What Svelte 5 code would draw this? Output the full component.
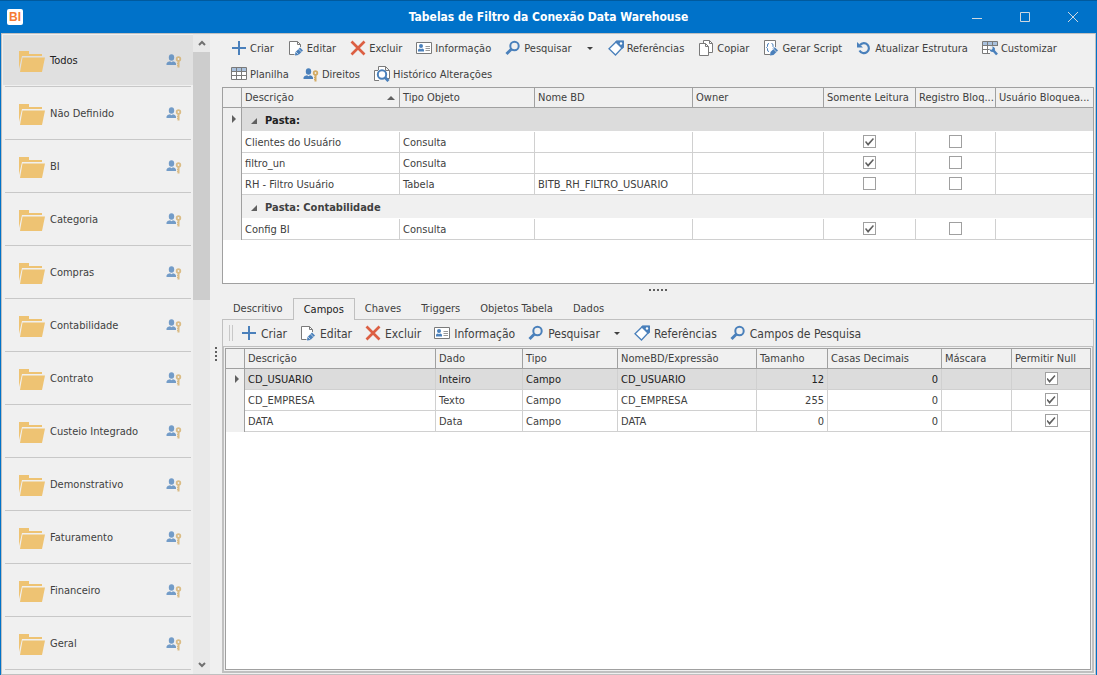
<script>
  const folders = [
    'Todos',
    'Não Definido',
    'BI',
    'Categoria',
    'Compras',
    'Contabilidade',
    'Contrato',
    'Custeio Integrado',
    'Demonstrativo',
    'Faturamento',
    'Financeiro',
    'Geral',
  ];

  const mainTools = [
    [
      { icon: 'add', label: 'Criar' },
      { icon: 'edit', label: 'Editar' },
      { icon: 'delete', label: 'Excluir' },
      { icon: 'info', label: 'Informação' },
      { icon: 'search', label: 'Pesquisar', menu: true },
      { icon: 'tag', label: 'Referências' },
      { icon: 'copy', label: 'Copiar' },
      { icon: 'script', label: 'Gerar Script' },
      { icon: 'refresh', label: 'Atualizar Estrutura' },
      { icon: 'customize', label: 'Customizar' },
    ],
    [
      { icon: 'sheet', label: 'Planilha' },
      { icon: 'rights', label: 'Direitos' },
      { icon: 'history', label: 'Histórico Alterações' },
    ],
  ];

  const fieldTools = [
    { icon: 'add', label: 'Criar' },
    { icon: 'edit', label: 'Editar' },
    { icon: 'delete', label: 'Excluir' },
    { icon: 'info', label: 'Informação' },
    { icon: 'search', label: 'Pesquisar', menu: true },
    { icon: 'tag', label: 'Referências' },
    { icon: 'search', label: 'Campos de Pesquisa' },
  ];

  const groups = [
    {
      title: 'Pasta:',
      rows: [
        { name: 'Clientes do Usuário', type: 'Consulta', db: '', readOnly: true },
        { name: 'filtro_un', type: 'Consulta', db: '', readOnly: true },
        { name: 'RH - Filtro Usuário', type: 'Tabela', db: 'BITB_RH_FILTRO_USUARIO', readOnly: false },
      ],
    },
    {
      title: 'Pasta: Contabilidade',
      rows: [{ name: 'Config BI', type: 'Consulta', db: '', readOnly: true }],
    },
  ];

  const fields = [
    { name: 'CD_USUARIO', data: 'Inteiro', size: 12 },
    { name: 'CD_EMPRESA', data: 'Texto', size: 255 },
    { name: 'DATA', data: 'Data', size: 0 },
  ];

  const tabs = ['Descritivo', 'Campos', 'Chaves', 'Triggers', 'Objetos Tabela', 'Dados'];

  let folder = $state('Todos');
  let tab = $state('Campos');
  let current = $state(0);
</script>

{#snippet icon(name)}
  <svg class="icon" viewBox="0 0 16 16" width="16" height="16" aria-hidden="true">
    {#if name === 'add'}
      <path d="M8 1v14M1 8h14" stroke="#4a80bb" stroke-width="2" fill="none" />
    {:else if name === 'edit'}
      <path d="M6.500 14.500H1.500V1.500H9.500L12.500 4.500V7" stroke="#7a7a7a" fill="#fff" />
      <path d="M9.500 1.500V4.500H12.500" stroke="#7a7a7a" fill="none" />
      <path d="M7 15.500L7.500 12L12 7.500L15 10.500L10.500 15Z" fill="#4a80bb" />
      <path d="M10.500 9L13.500 12M8 12L10.500 14.500" stroke="#efefef" stroke-width=".7" />
    {:else if name === 'delete'}
      <path d="M1.500 1.500L14.500 14.500M14.500 1.500L1.500 14.500" stroke="#dc5f43" stroke-width="2.700" />
    {:else if name === 'info'}
      <path d="M.5 2.500h15v11H.5z" stroke="#7a7a7a" fill="#fff" />
      <circle cx="5" cy="6" r="2" fill="#4a80bb" />
      <path d="M2 11.500V10Q2 8.500 4 8.500L5 9.300L6 8.500Q8 8.500 8 10V11.500Z" fill="#4a80bb" />
      <path d="M9.500 6.500H14M9.500 8.500H14M9.500 10.500H14" stroke="#999" />
    {:else if name === 'search'}
      <circle cx="9.500" cy="6" r="4.200" stroke="#4a80bb" stroke-width="2" fill="none" />
      <path d="M6.500 9L1.500 14" stroke="#4a80bb" stroke-width="3" />
    {:else if name === 'tag'}
      <path d="M8.500 1.500H14.500V7.500L7.500 15L1 8.700Z" stroke="#4a80bb" stroke-width="1.300" fill="#fff" />
      <path d="M8.500 .5H16V7.500L14 9L7 2Z" fill="#4a80bb" />
      <circle cx="13" cy="3.500" r="1.200" fill="#fff" />
    {:else if name === 'copy'}
      <path d="M5.500 3.500V.5H11.500L14.500 3.500V12.500H11" stroke="#7a7a7a" fill="#fff" />
      <path d="M11.500 .5V3.500H14.500" stroke="#7a7a7a" fill="none" />
      <path d="M1.500 3.500H7.500L10.500 6.500V15.500H1.500Z" stroke="#7a7a7a" fill="#fff" />
      <path d="M7.500 3.500V6.500H10.500" stroke="#7a7a7a" fill="none" />
    {:else if name === 'script'}
      <path d="M7 14.500H1.500V.5H12.500V7" stroke="#7a7a7a" fill="#fff" />
      <path d="M6 3.500Q4.500 3.500 4.500 5V6.500L3.500 7.500L4.500 8.500V10Q4.500 11.500 6 11.500M8.500 3.500Q10 3.500 10 5V6.500L11 7.500L10 8.500" stroke="#4a80bb" fill="none" />
      <path d="M7 15.500L7.500 12L12 7.500L15 10.500L10.500 15Z" fill="#4a80bb" />
      <path d="M10.500 9L13.500 12" stroke="#efefef" stroke-width=".7" />
    {:else if name === 'refresh'}
      <path d="M4 5A5 5 0 1 1 3.500 10.500" stroke="#4a80bb" stroke-width="2.200" fill="none" />
      <path d="M1 2L7 7.500H1Z" fill="#4a80bb" />
    {:else if name === 'customize'}
      <path d="M.5 1.500h15v12H.5z" stroke="#7a7a7a" fill="#fff" />
      <path d="M1 2h14v3H1z" fill="#a9c1dd" />
      <path d="M.5 5.500h15M.5 9.500h7M5.500 1.500v12M10.500 1.500v4" stroke="#7a7a7a" />
      <path d="M8 6H16V16H8Z" fill="#efefef" />
      <path d="M10.500 9.500L15 14.500" stroke="#4a80bb" stroke-width="2.600" />
      <path d="M7.500 8.500L9 10L10.500 9V7L9.500 6.500Q12 6 13 8.500Q13 12 10 12Q7.500 11.500 7.500 8.500Z" fill="#4a80bb" />
    {:else if name === 'sheet'}
      <path d="M.5 1.500h15v12H.5z" stroke="#7a7a7a" fill="#fff" />
      <path d="M1 2h14v3H1z" fill="#a9c1dd" />
      <path d="M.5 5.500h15M.5 9.500h15M5.500 1.500v12M10.500 1.500v12" stroke="#7a7a7a" />
    {:else if name === 'rights'}
      <ellipse cx="5.500" cy="5.500" rx="2.700" ry="3.200" fill="#4a80bb" />
      <path d="M.5 13V11.500Q1 9.800 4 9.300L5.500 10.300L7 9.300Q9.500 9.800 10 11.500V13Z" fill="#4a80bb" />
      <circle cx="12.500" cy="7" r="1.800" stroke="#d3ab63" stroke-width="1.800" fill="#efefef" />
      <path d="M12.500 9V15.500" stroke="#d3ab63" stroke-width="2" />
      <path d="M11 11.500h1M11 13.500h1" stroke="#d3ab63" />
    {:else if name === 'history'}
      <path d="M4.500 4V.5H11.500L15.500 4.500V12.500H12M11.500 .5V4.500H15.500M5 14.500H.5V4.500H4" stroke="#7a7a7a" fill="#fff" />
      <circle cx="8" cy="8.500" r="4.200" stroke="#4a80bb" stroke-width="2" fill="#fff" />
      <path d="M10.500 11L14.500 15" stroke="#4a80bb" stroke-width="3" />
    {/if}
  </svg>
{/snippet}

{#snippet tool(item)}
  <button class="tool" type="button">{@render icon(item.icon)}<span>{item.label}</span></button>
  {#if item.menu}
    <button class="drop" type="button" aria-label="Opções"><i class="caret"></i></button>
  {/if}
{/snippet}

<div class="window">
  <header class="titlebar">
    <span class="logo">BI</span>
    <h1>Tabelas de Filtro da Conexão Data Warehouse</h1>
    <div class="controls">
      <button type="button" aria-label="Minimizar">
        <svg viewBox="0 0 10 10" width="10" height="10"><path d="M0 6.500h10" /></svg>
      </button>
      <button type="button" aria-label="Maximizar">
        <svg viewBox="0 0 10 10" width="10" height="10"><path d="M.5 .5h9v9h-9z" /></svg>
      </button>
      <button type="button" aria-label="Fechar">
        <svg viewBox="0 0 10 10" width="10" height="10"><path d="M0 0L10 10M10 0L0 10" /></svg>
      </button>
    </div>
  </header>

  <div class="body">
    <nav class="sidebar">
      <div class="folders">
        {#each folders as name}
          <div class="folder">
            <button type="button" class:selected={folder === name} onclick={() => (folder = name)}>
              <svg viewBox="0 0 26 22" width="26" height="22" aria-hidden="true">
                <path d="M0 0H10V3H23V5H3L0 18Z" fill="#eec373" />
                <path d="M3.500 6.500H26L23 21H1Z" fill="#eec373" />
              </svg>
              <span>{name}</span>
              {@render icon('rights')}
            </button>
          </div>
        {/each}
      </div>
      <div class="scrollbar">
        <svg viewBox="0 0 8 6" width="8" height="6"><path d="M1 5L4 2L7 5" /></svg>
        <div class="track"><div class="thumb"></div></div>
        <svg viewBox="0 0 8 6" width="8" height="6"><path d="M1 1L4 4L7 1" /></svg>
      </div>
    </nav>

    <div class="splitter vertical"><i></i><i></i><i></i><i></i></div>

    <main>
      <div class="toolbar">
        {#each mainTools as line}
          <div class="line">
            {#each line as item}{@render tool(item)}{/each}
          </div>
        {/each}
      </div>

      <div class="grid objects">
        <table>
          <colgroup>
            <col class="w19" /><col class="w158" /><col class="w135" /><col class="w158" />
            <col class="w131" /><col class="w92" /><col class="w80" /><col />
          </colgroup>
          <thead>
            <tr>
              <th></th>
              <th class="sorted"><span>Descrição</span></th>
              <th>Tipo Objeto</th>
              <th>Nome BD</th>
              <th>Owner</th>
              <th>Somente Leitura</th>
              <th>Registro Bloq...</th>
              <th>Usuário Bloquea...</th>
            </tr>
          </thead>
          <tbody>
            {#each groups as group, i}
              <tr class="group" class:selected={i === 0}>
                <td class="mark">{#if i === 0}<i></i>{/if}</td>
                <td colspan="7"><i class="expand"></i>{group.title}</td>
              </tr>
              {#each group.rows as row}
                <tr>
                  <td class="mark"></td>
                  <td>{row.name}</td>
                  <td>{row.type}</td>
                  <td>{row.db}</td>
                  <td></td>
                  <td class="check"><input type="checkbox" checked={row.readOnly} aria-label="Somente Leitura" /></td>
                  <td class="check"><input type="checkbox" aria-label="Registro Bloqueado" /></td>
                  <td></td>
                </tr>
              {/each}
            {/each}
          </tbody>
        </table>
      </div>

      <div class="splitter"><i></i><i></i><i></i><i></i><i></i></div>

      <div class="tabs" role="tablist">
        {#each tabs as name}
          <button type="button" role="tab" aria-selected={tab === name} class:active={tab === name} onclick={() => (tab = name)}>{name}</button>
        {/each}
      </div>

      <section class="panel">
        <div class="toolbar large">
          <div class="line">
            <span class="grip"></span>
            {#each fieldTools as item}{@render tool(item)}{/each}
          </div>
        </div>
        <div class="frame">
          <div class="grid fields">
            <table>
              <colgroup>
                <col class="w19" /><col class="w191" /><col class="w87" /><col class="w95" /><col class="w139" />
                <col class="w71" /><col class="w114" /><col class="w70" /><col />
              </colgroup>
              <thead>
                <tr>
                  <th></th>
                  <th>Descrição</th>
                  <th>Dado</th>
                  <th>Tipo</th>
                  <th>NomeBD/Expressão</th>
                  <th>Tamanho</th>
                  <th>Casas Decimais</th>
                  <th>Máscara</th>
                  <th>Permitir Null</th>
                </tr>
              </thead>
              <tbody>
                {#each fields as field, i}
                  <tr class:selected={i === current} onclick={() => (current = i)}>
                    <td class="mark">{#if i === current}<i></i>{/if}</td>
                    <td>{field.name}</td>
                    <td>{field.data}</td>
                    <td>Campo</td>
                    <td>{field.name}</td>
                    <td class="number">{field.size}</td>
                    <td class="number">0</td>
                    <td></td>
                    <td class="check"><input type="checkbox" checked aria-label="Permitir Null" /></td>
                  </tr>
                {/each}
              </tbody>
            </table>
          </div>
        </div>
      </section>
    </main>
  </div>
</div>

<style>
  :global(body) {
    margin: 0;
  }

  .window,
  .window * {
    box-sizing: border-box;
  }

  .window {
    --blue: #0072c9;
    --face: #f0f0f0;
    --line: #a0a0a0;
    --soft: #c0c0c0;

    display: flex;
    flex-direction: column;
    height: 100vh;
    background: var(--blue);
    color: #404040;
    font-family: "DejaVu Sans Condensed", "DejaVu Sans", sans-serif;
    font-size: 11px;
    line-height: 14px;
  }

  button {
    border: 0;
    padding: 0;
    background: none;
    color: inherit;
    font: inherit;
    white-space: nowrap;
  }

  svg {
    flex: none;
  }

  /* title bar */
  .titlebar {
    display: flex;
    align-items: center;
    flex: none;
    height: 33px;
    padding-left: 7px;
    border-top: 1px solid #005a9e;
    color: #fff;
  }
  .logo {
    width: 16px;
    height: 16px;
    border-radius: 2px;
    background: #fff;
    color: #f47b35;
    font: bold 12px/16px "Liberation Sans", sans-serif;
    text-align: center;
  }
  h1 {
    flex: 1;
    margin: 0;
    padding-left: 121px;
    font-size: 12px;
    text-align: center;
  }
  .controls {
    display: flex;
  }
  .controls button {
    width: 48px;
    height: 32px;
    padding-top: 4px;
  }
  .controls path {
    fill: none;
    stroke: #cfd8e0;
  }

  .body {
    display: flex;
    flex: 1;
    min-height: 0;
    margin: 0 1px;
    padding-right: 1px;
    border: 1px solid var(--soft);
    background: var(--face);
  }

  /* folder list */
  .sidebar {
    display: flex;
    flex: none;
    width: 208px;
  }
  .folders {
    flex: 1;
    overflow: hidden;
    padding: 1px 0 0 1px;
  }
  .folder {
    height: 53px;
  }
  .folder::after {
    content: "";
    display: block;
    margin: 1px 2px;
    border-top: 1px solid #c8c8c8;
  }
  .folder button {
    display: flex;
    align-items: center;
    width: 100%;
    height: 50px;
    padding: 4px 11px 0 16px;
  }
  .folder button.selected {
    background: #e0e0e0;
    color: #202020;
  }
  .folder span {
    flex: 1;
    padding: 0 0 2px 5px;
    text-align: left;
  }
  .folder .icon {
    margin-bottom: 4px;
    opacity: 0.75;
  }
  .scrollbar {
    display: flex;
    flex-direction: column;
    align-items: center;
    width: 17px;
    background: #e9e9e9;
  }
  .scrollbar svg {
    margin: 6px 0;
  }
  .scrollbar path {
    fill: none;
    stroke: #707070;
    stroke-width: 2;
  }
  .track {
    flex: 1;
    width: 100%;
  }
  .thumb {
    height: 41%;
    background: #cdcdcd;
  }

  .splitter {
    display: flex;
    align-items: flex-start;
    justify-content: center;
    gap: 2px;
    flex: none;
    height: 14px;
    padding-top: 5px;
  }
  .splitter i {
    width: 2px;
    height: 2px;
    background: #606060;
  }
  .splitter.vertical {
    flex-direction: column;
    align-items: center;
    width: 12px;
    height: auto;
    padding: 0;
  }

  main {
    display: flex;
    flex-direction: column;
    flex: 1;
    min-width: 0;
    padding-bottom: 1px;
  }

  /* toolbars */
  .toolbar {
    padding: 1px 0 0 9px;
  }
  .line {
    display: flex;
    align-items: center;
    gap: 14px;
    height: 26px;
  }
  .tool {
    display: flex;
    align-items: center;
    gap: 3px;
  }
  .tool span {
    padding-top: 1px;
  }
  .drop {
    width: 8px;
    height: 20px;
  }
  .caret {
    display: block;
    margin: 0 auto;
    width: 6px;
    border: 3px solid transparent;
    border-top-color: #404040;
    border-bottom: 0;
  }
  .toolbar.large {
    padding: 0 0 0 6px;
    font-size: 12px;
  }
  .large .line {
    gap: 13px;
  }
  .large .tool {
    gap: 4px;
  }
  .grip {
    width: 4px;
    height: 16px;
    margin-right: -5px;
    border: solid #c8c8c8;
    border-width: 0 1px;
  }

  /* grids */
  .grid {
    border: 1px solid var(--line);
    background: #fff;
    overflow: hidden;
  }
  .objects {
    flex: none;
    height: 197px;
  }
  table {
    width: 100%;
    border-collapse: separate;
    border-spacing: 0;
    table-layout: fixed;
  }
  th,
  td {
    height: 21px;
    padding: 2px 3px 0;
    overflow: hidden;
    border: solid #d0d0d0;
    border-width: 0 1px 1px 0;
    font-weight: normal;
    text-align: left;
    text-overflow: ellipsis;
    white-space: nowrap;
  }
  th {
    height: 20px;
    padding: 0 0 0 3px;
    border-color: var(--line);
    background: var(--face);
  }
  th:last-child,
  td:last-child {
    border-right: 0;
  }
  .sorted span {
    display: flex;
    align-items: center;
    justify-content: space-between;
  }
  .sorted span::after {
    content: "";
    margin-right: 4px;
    border: 4px solid transparent;
    border-bottom-color: #606060;
    border-top: 0;
  }
  td.mark {
    padding: 0 0 2px 9px;
    border-right-color: var(--line);
    border-bottom: 0;
    background: var(--face);
  }
  .mark i {
    display: block;
    width: 4px;
    border: 4px solid transparent;
    border-left-color: #606060;
    border-right: 0;
  }
  tr.selected td:not(.mark) {
    background: #dcdcdc;
    color: #202020;
  }
  .group td {
    height: 24px;
    border-bottom-color: #fff;
    font-weight: bold;
  }
  .group td:not(.mark) {
    padding-left: 9px;
    background: var(--face);
  }
  .expand {
    display: inline-block;
    margin-right: 8px;
    border: 3px solid #606060;
    border-top-color: transparent;
    border-left-color: transparent;
  }
  .number {
    text-align: right;
  }
  td.check {
    padding: 0 0 1px;
  }
  input {
    appearance: none;
    display: block;
    width: 13px;
    height: 13px;
    margin: 0 auto;
    border: 1px solid var(--line);
    background: #fff;
  }
  input:checked::before {
    content: "";
    display: block;
    width: 9px;
    height: 8px;
    margin: 2px 1px;
    background: #606060;
    clip-path: polygon(0 50%, 12% 38%, 34% 66%, 88% 0, 100% 12%, 34% 100%);
  }

  .w19 { width: 19px; }
  .w70 { width: 70px; }
  .w71 { width: 71px; }
  .w80 { width: 80px; }
  .w87 { width: 87px; }
  .w92 { width: 92px; }
  .w95 { width: 95px; }
  .w114 { width: 114px; }
  .w131 { width: 131px; }
  .w135 { width: 135px; }
  .w139 { width: 139px; }
  .w158 { width: 158px; }
  .w191 { width: 191px; }

  /* tabs */
  .tabs {
    display: flex;
    flex: none;
    height: 21px;
    padding-left: 1px;
  }
  .tabs button {
    padding: 1px 10px 0;
  }
  .tabs button.active {
    z-index: 1;
    margin-bottom: -1px;
    padding: 0 10px;
    border: 1px solid var(--soft);
    border-bottom: 0;
    background: var(--face);
    color: #202020;
  }
  .panel {
    display: flex;
    flex-direction: column;
    flex: 1;
    min-height: 0;
    border: 1px solid var(--soft);
  }
  .frame {
    display: flex;
    flex: 1;
    min-height: 0;
    padding: 1px;
    border: 1px solid var(--soft);
  }
  .fields {
    flex: 1;
  }
</style>
